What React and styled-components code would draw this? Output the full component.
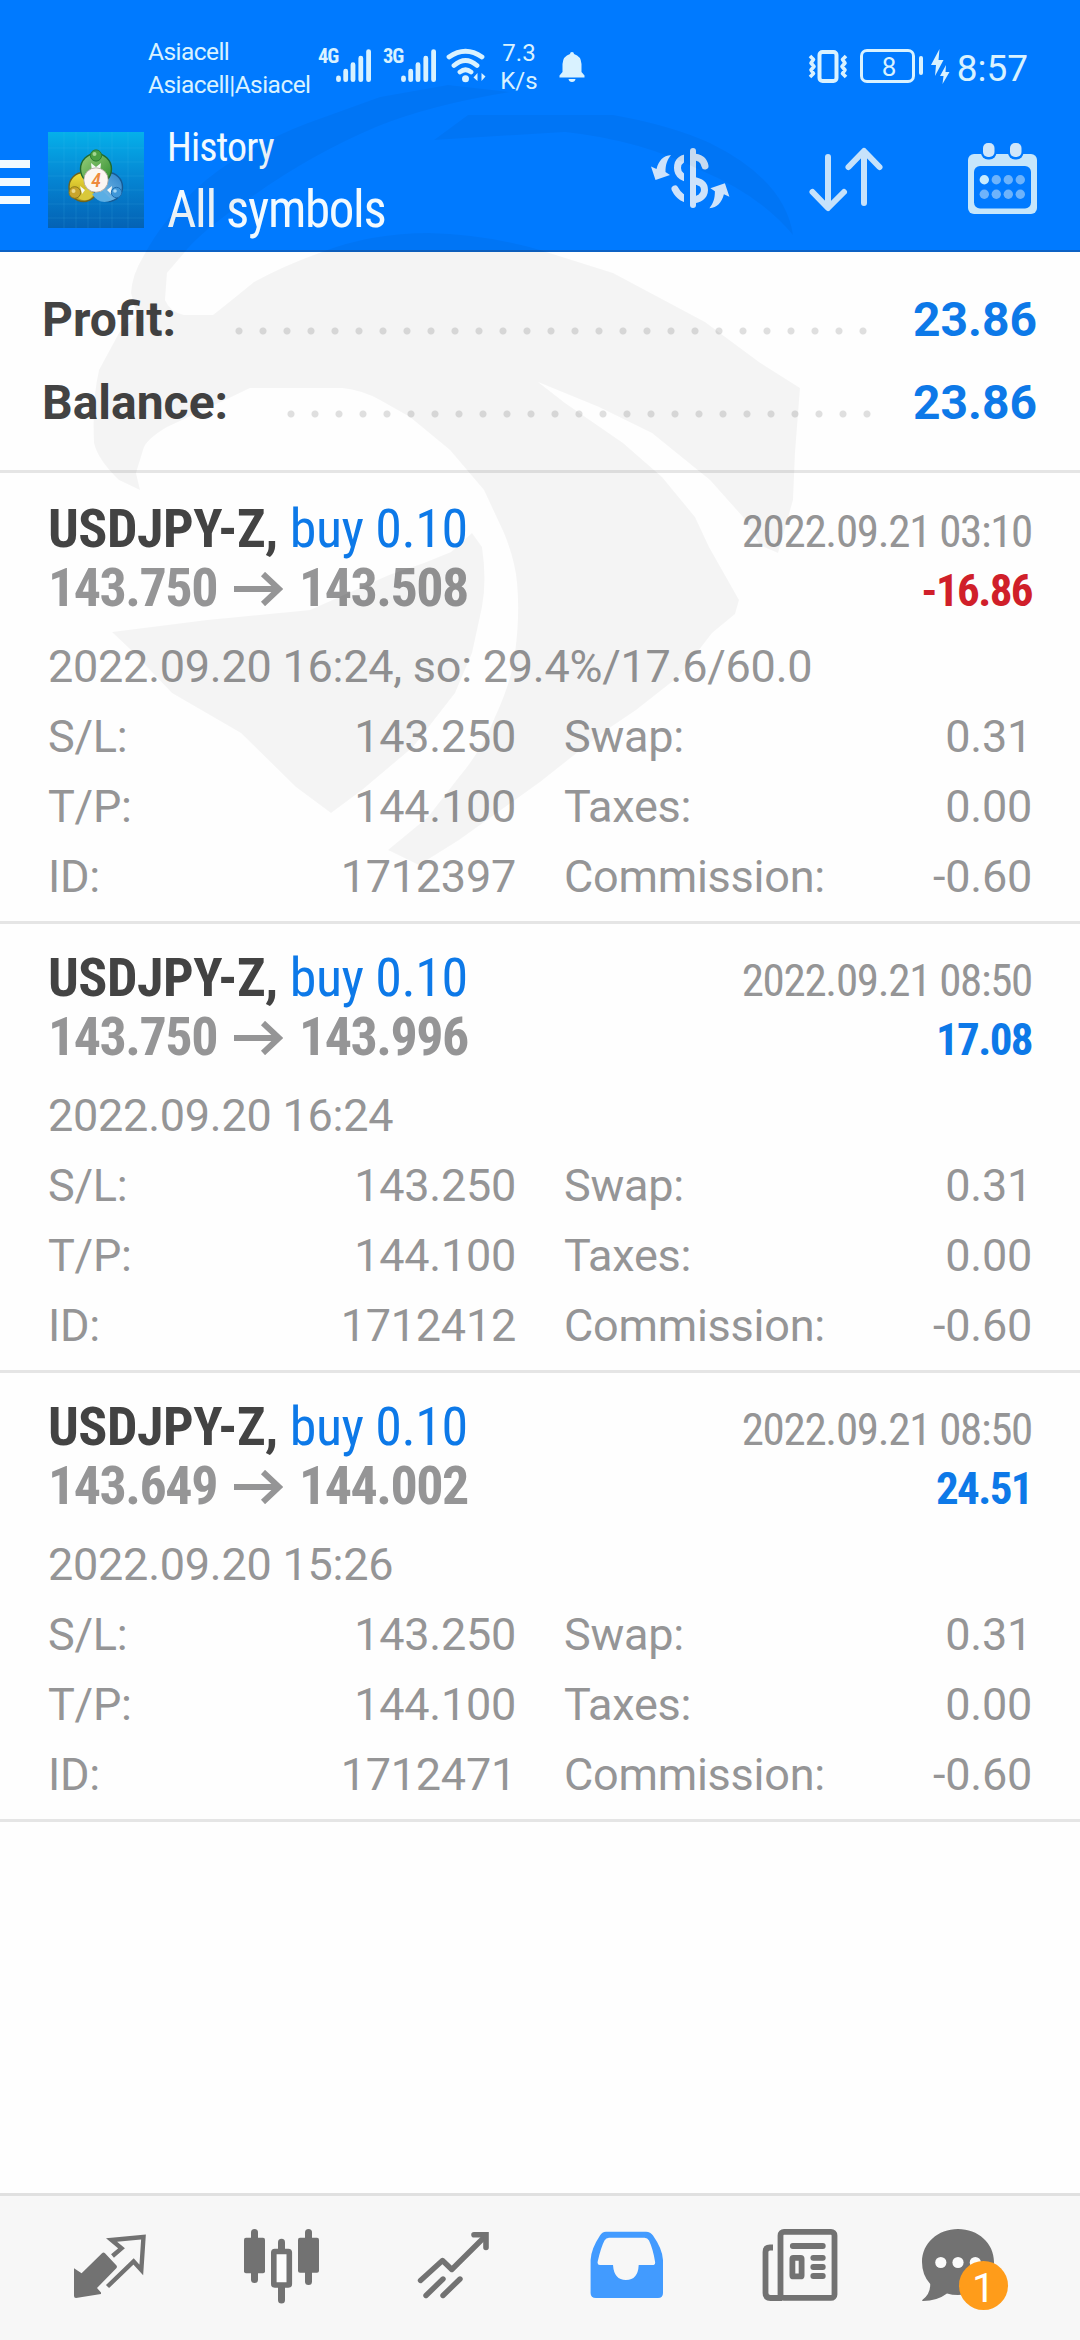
import React from 'react';
import styled, { createGlobalStyle } from 'styled-components';

const GlobalStyle = createGlobalStyle`
  * {
    box-sizing: border-box;
  }
  body {
    margin: 0;
    background: #fff;
    font-family: Roboto, sans-serif;
  }
`;

const Screen = styled.div`
  position: relative;
  display: flex;
  flex-direction: column;
  width: 1080px;
  height: 2340px;
  overflow: hidden;
  background: #fefefe;
`;

const Header = styled.header`
  height: 252px;
  background: #007aff;
  border-bottom: 2px solid #0d62c4;
  color: #f2faff;
`;

const StatusBar = styled.div`
  display: flex;
  align-items: flex-start;
  height: 116px;
  padding: 35px 52px 0 148px;
  color: #d9f2ff;
`;

const Carrier = styled.div`
  width: 170px;
  font-size: 24.5px;
  line-height: 33px;
  letter-spacing: -0.55px;
  white-space: nowrap;
`;

const Signal = styled.div`
  display: flex;
  width: 65px;
  padding-top: 12px;
`;

const SignalType = styled.span`
  width: 18px;
  font-family: 'Roboto Condensed', Roboto, sans-serif;
  font-size: 20.5px;
  font-weight: 700;
  line-height: 19px;
  letter-spacing: -1px;
`;

const WifiIcon = styled.svg`
  margin: 12px 0 0 -3px;
`;

const Speed = styled.div`
  width: 44px;
  margin-left: 10px;
  padding-top: 4px;
  font-size: 24px;
  line-height: 28px;
  text-align: center;
`;

const BellIcon = styled.svg`
  margin: 17px 0 0 18px;
`;

const StatusRight = styled.div`
  display: flex;
  margin-left: auto;
  padding-top: 14px;
`;

const Battery = styled.div`
  width: 55px;
  height: 34px;
  margin-left: 12px;
  padding-left: 4px;
  border: 3px solid #d9f2ff;
  border-radius: 7px;
  font-size: 26px;
  line-height: 30px;
  text-align: center;
`;

const BatteryTip = styled.div`
  width: 4px;
  height: 19px;
  margin: 7px 8px 0 4px;
  border-radius: 2px;
  background: #d9f2ff;
`;

const Clock = styled.div`
  margin-left: 6px;
  font-size: 37px;
  line-height: 40px;
`;

const Toolbar = styled.div`
  display: flex;
  align-items: flex-start;
  padding-right: 34px;
`;

const MenuIcon = styled.div`
  display: flex;
  flex-direction: column;
  gap: 10px;
  width: 30px;
  padding-top: 44px;
`;

const MenuBar = styled.span`
  height: 8px;
  background: #f2faff;
`;

const AppLogo = styled.svg`
  margin: 16px 0 0 18px;
`;

const Titles = styled.div`
  margin: 7px 0 0 23px;
  font-family: 'Roboto Condensed', Roboto, sans-serif;
  white-space: nowrap;
`;

const ScreenName = styled.div`
  font-size: 40px;
  line-height: 50px;
  letter-spacing: -0.9px;
`;

const Filter = styled.div`
  margin-top: 6px;
  font-size: 51px;
  line-height: 61px;
  letter-spacing: -1.35px;
`;

const Actions = styled.div`
  display: flex;
  gap: 74px;
  margin: 22px 0 0 auto;
`;

const Summary = styled.section`
  height: 221px;
  padding: 26px 43px 0 42px;
  border-bottom: 3px solid #e5e5e5;
`;

const SummaryRow = styled.div`
  display: flex;
  align-items: center;
  height: 83px;
  font-size: 48px;
  font-weight: 700;
  line-height: 83px;
  color: #434343;
`;

const Dots = styled.div`
  flex: 1;
  height: 8px;
  margin: 23px ${props => props.$right}px 0 ${props => props.$left}px;
  background: radial-gradient(circle at 4px 4px, #dfdfdf 3px, transparent 4px) 0 0 / 24px 8px;
`;

const SummaryValue = styled.span`
  color: #0d79e8;
`;

const Deal = styled.article`
  height: ${props => (props.$first ? 451 : 449)}px;
  padding: ${props => (props.$first ? 26 : 24)}px 48px 0;
  border-bottom: 3px solid #e5e5e5;
  color: #959596;
  font-size: 45px;
  line-height: 70px;
  letter-spacing: -0.25px;
  white-space: nowrap;
`;

const DealLine = styled.div`
  display: flex;
  align-items: baseline;
  justify-content: space-between;
  height: 59px;
  font-family: 'Roboto Condensed', Roboto, sans-serif;
  line-height: 59px;
  letter-spacing: -1.3px;
`;

const Symbol = styled.span`
  font-size: 54px;
  font-weight: 700;
  letter-spacing: -0.5px;
  color: #434343;
`;

const Volume = styled.span`
  font-weight: 400;
  color: #0d79e8;
`;

const Prices = styled.span`
  font-size: 54px;
  font-weight: 700;
  letter-spacing: -1.5px;
`;

const ArrowIcon = styled.svg`
  margin: 0 16px 0 17px;
`;

const Result = styled.span`
  font-weight: 700;
  letter-spacing: -1.6px;
  color: ${props => (props.$loss ? '#d01f2a' : '#0d79e8')};
`;

const OpenTime = styled.div`
  margin-top: 15px;
`;

const Details = styled.div`
  display: grid;
  grid-template-columns: 468px 468px;
  column-gap: 48px;
`;

const Detail = styled.div`
  display: flex;
  justify-content: space-between;
`;

const NavBar = styled.nav`
  display: flex;
  height: 147px;
  margin-top: auto;
  padding: 0 24px;
  background: #f7f7f7;
  border-top: 3px solid #e0e0e0;
  color: #727272;
`;

const NavItem = styled.div`
  display: flex;
  flex: 1;
  justify-content: center;
  padding-top: 26px;
  color: ${props => (props.$active ? '#429bff' : 'inherit')};
`;

const ChatIcon = styled.div`
  position: relative;
  width: 88px;
  height: 90px;
  margin-right: 8px;
`;

const Badge = styled.span`
  position: absolute;
  left: 37px;
  top: 39px;
  width: 49px;
  height: 49px;
  border-radius: 50%;
  background: #ff9c1a;
  color: #fff;
  font-size: 41px;
  line-height: 55px;
  text-align: center;
`;

const Watermark = styled.svg`
  position: absolute;
  left: 0;
  top: 0;
  pointer-events: none;
`;

const deals = [
  { id: '1712397', open: '143.750', close: '143.508', closed: '2022.09.21 03:10', result: '-16.86', opened: '2022.09.20 16:24, so: 29.4%/17.6/60.0' },
  { id: '1712412', open: '143.750', close: '143.996', closed: '2022.09.21 08:50', result: '17.08', opened: '2022.09.20 16:24' },
  { id: '1712471', open: '143.649', close: '144.002', closed: '2022.09.21 08:50', result: '24.51', opened: '2022.09.20 15:26' },
];

const SignalBars = () => (
  <svg width="37" height="36" viewBox="0 0 37 36" stroke="#d9f2ff" strokeWidth="4.8" strokeLinecap="round">
    <path d="M2.5 31V32.7M9.7 24.2V32.7M17 17.7V32.7M24.8 11.2V32.7M32.6 4.6V32.7" />
  </svg>
);

const Logo = () => (
  <AppLogo width="96" height="96" viewBox="0 0 96 96">
    <defs>
      <linearGradient id="sky" x1="0" y1="0" x2="0" y2="1">
        <stop offset="0" stopColor="#05b0ea" />
        <stop offset="0.5" stopColor="#0584d2" />
        <stop offset="1" stopColor="#0462b4" />
      </linearGradient>
      <linearGradient id="green" x1="0" y1="0" x2="1" y2="1">
        <stop offset="0" stopColor="#9bd07c" />
        <stop offset="1" stopColor="#2a8a2c" />
      </linearGradient>
      <linearGradient id="yellow" x1="0" y1="0" x2="0" y2="1">
        <stop offset="0" stopColor="#f2e23c" />
        <stop offset="1" stopColor="#b59a1c" />
      </linearGradient>
      <linearGradient id="blue" x1="1" y1="0" x2="0" y2="1">
        <stop offset="0" stopColor="#2a80c8" />
        <stop offset="1" stopColor="#8ccdf2" />
      </linearGradient>
    </defs>
    <rect width="96" height="96" fill="url(#sky)" />
    <path d="M16 0V96M28 0V96M40 0V96M52 0V96M64 0V96M80 0V96M0 16H96M0 30H96M0 44H96M0 58H96M0 72H96M0 86H96" stroke="#5cc4f0" strokeOpacity="0.14" />
    <circle cx="35.500" cy="55" r="14.500" fill="url(#yellow)" stroke="#6c6420" strokeWidth="1.400" />
    <circle cx="60" cy="55" r="14.500" fill="url(#blue)" stroke="#165a94" strokeWidth="1.400" />
    <circle cx="48" cy="37" r="15.500" fill="url(#green)" stroke="#1f6a30" strokeWidth="1.400" />
    <path d="M30 66Q40 72 46 62L38 56Z" fill="#d9c83a" />
    <path d="M44 62Q52 74 64 68L54 58Z" fill="#5aaee4" />
    <path d="M43 31L48 35L53 31L52 40H44ZM32 54L37 58L34 62ZM64 54L59 58L63 62Z" fill="#f4f8f4" />
    <circle cx="48" cy="23.500" r="5.600" fill="#4ba043" stroke="#2a7a30" />
    <circle cx="26.800" cy="60.500" r="5.800" fill="#c9a52c" stroke="#8c7818" />
    <circle cx="68.500" cy="60.500" r="5.200" fill="#3f97d8" stroke="#1f6cae" />
    <circle cx="46.500" cy="22" r="2" fill="#a4d690" />
    <circle cx="25.500" cy="59" r="2" fill="#ecd98a" />
    <circle cx="67" cy="59" r="1.800" fill="#a6d8f6" />
    <circle cx="48" cy="48" r="12.200" fill="#fbf6f2" stroke="#a9a29a" strokeWidth="0.800" />
    <text x="48" y="55" textAnchor="middle" fontFamily="Roboto Condensed, sans-serif" fontSize="20" fontStyle="italic" fontWeight="500" fill="#ee8a3c">4</text>
  </AppLogo>
);

const CurrencyIcon = () => (
  <svg width="84" height="84" viewBox="0 0 84 84" fill="#cfe3fa">
    <clipPath id="split">
      <path d="M0 0H38V84H0ZM44 0H84V84H44Z" />
    </clipPath>
    <path d="M59 28C57.500 21 53 19 46.500 19C36 19 31.500 23 31.500 30C31.500 38 38 40 46.500 42S58.500 46 58.500 52S53 62 46 62S33 59 29 51" fill="none" stroke="#cfe3fa" strokeWidth="7" strokeLinecap="round" clipPath="url(#split)" />
    <rect x="44" y="10" width="6" height="60" rx="3" />
    <path id="turn" d="M25 17C17 18 13 22 10.500 31L5 28.500L9.500 42L24 37L19.500 34C19.500 27 21 22 25 17Z" />
    <use href="#turn" transform="rotate(180 44.2 43.6)" />
  </svg>
);

const SortIcon = () => (
  <svg width="84" height="84" viewBox="0 0 84 84" fill="none" stroke="#c6e2fb" strokeWidth="6" strokeLinecap="round" strokeLinejoin="round">
    <path d="M24 19V69M8.500 54L24 70L40 54M60 65V14M44.500 29L60 13L75.500 29" />
  </svg>
);

const CalendarIcon = () => (
  <svg width="84" height="84" viewBox="0 0 84 84">
    <rect x="6" y="16" width="69" height="60" rx="6" fill="#c6e6fb" />
    <rect x="12" y="28" width="57" height="42.500" rx="6" fill="#007aff" />
    <rect x="19" y="3" width="15.500" height="18.500" rx="7" fill="#007aff" />
    <rect x="46" y="3" width="15.500" height="18.500" rx="7" fill="#007aff" />
    <rect x="21" y="5" width="11.500" height="14" rx="5" fill="#cfe6fa" />
    <rect x="48" y="5" width="11.500" height="14" rx="5" fill="#cfe6fa" />
    {[41.7, 56.3].map(cy => [22.3, 34.3, 46.3, 58.3].map(cx => (
      <circle key={`${cx}-${cy}`} cx={cx} cy={cy} r="4.700" fill={cx === 22.3 && cy === 41.7 ? '#c6ecff' : '#6db3fb'} />
    )))}
  </svg>
);

const QuotesIcon = () => (
  <svg width="80" height="90" viewBox="0 0 80 90">
    <path d="M4 46.300L11.600 51.300L32 31.200Q33.500 30 35 31.200L46.500 43.500Q47.500 45 46.300 46.300L27 66L31 70.500V72L6 76Q4 76 4 74Z" fill="currentColor" />
    <path d="M42.500 34L51.500 26.300L41.500 18L73.500 15L71.300 48L63.600 39.500L37.500 64.500" fill="none" stroke="currentColor" strokeWidth="4.400" />
  </svg>
);

const CandlesIcon = () => (
  <svg width="80" height="90" viewBox="0 0 80 90" fill="currentColor">
    <rect x="9" y="7" width="7" height="54" rx="3.500" />
    <rect x="2" y="15.700" width="21" height="35.500" rx="2" />
    <rect x="36" y="16.700" width="7" height="20" rx="3.500" />
    <rect x="36" y="56" width="7" height="25.500" rx="3.500" />
    <rect x="31.800" y="29.500" width="15.500" height="33.500" rx="1" fill="#fcfcfc" stroke="currentColor" strokeWidth="5.600" />
    <rect x="63" y="7" width="7" height="56" rx="3.500" />
    <rect x="56" y="15.700" width="21" height="35" rx="2" />
  </svg>
);

const TradeIcon = () => (
  <svg width="80" height="90" viewBox="0 0 80 90" fill="none" stroke="currentColor" strokeWidth="5.400" strokeLinecap="round">
    <path d="M6.500 58.500L28.500 38.500L37.800 47.500L71 14.500" strokeLinejoin="round" />
    <path d="M60 12.700H72V25.500" strokeWidth="5.600" />
    <path d="M12 73.500L29 57M29 73.500L46 57" />
  </svg>
);

const HistoryIcon = () => (
  <svg width="80" height="90" viewBox="0 0 80 90">
    <path fillRule="evenodd" fill="currentColor" d="M20 9.700H60Q64.500 9.700 67 13.500Q76.500 27 77 38V71Q77 76 72 76H10Q4.600 76 4.600 71V38Q5 27 14 13.500Q16 9.700 20 9.700ZM23 15.700Q20 15.700 18.500 18.500Q15 25 11.700 39.500Q11 43 14 43H27Q28 58 40 58T52.700 43H66.500Q69.800 43 69 39.500Q67 27 63 18.500Q61.500 15.700 58.500 15.700Z" />
  </svg>
);

const NewsIcon = () => (
  <svg width="80" height="90" viewBox="0 0 80 90" fill="none" stroke="currentColor" strokeWidth="5.800">
    <rect x="22.500" y="9.900" width="54" height="66" rx="3.500" />
    <path d="M15 25.500H12Q7.500 25.500 7.500 30V71Q7.500 76 12.500 76H24" />
    <path d="M34.800 24H64.800M55.300 35.800H64.800M55.300 45H64.800M55.300 54H64.800" strokeLinecap="round" />
    <rect x="34.400" y="35.800" width="9.200" height="18.600" rx="1" />
  </svg>
);

const MessagesIcon = () => (
  <svg width="88" height="90" viewBox="0 0 88 90">
    <path fill="currentColor" d="M36 7C56 7 72 21 72 40S56 73 36 73Q30 73 25 71.500Q15 79 1 79Q0 79 0.300 78Q8.500 72 8.200 62Q0 53 0 40C0 21 16 7 36 7Z" />
    <g fill="#fbfbfb">
      <circle cx="18.800" cy="40.500" r="5.600" />
      <circle cx="36" cy="40.500" r="5.600" />
      <circle cx="53.300" cy="40.500" r="5.600" />
    </g>
  </svg>
);

const DealItem = ({ deal, first }) => (
  <Deal $first={first}>
    <DealLine>
      <Symbol>USDJPY-Z, <Volume>buy 0.10</Volume></Symbol>
      <span>{deal.closed}</span>
    </DealLine>
    <DealLine>
      <Prices>
        {deal.open}
        <ArrowIcon width="49" height="34" viewBox="0 0 49 34" fill="none" stroke="currentColor" strokeWidth="6">
          <path d="M0 17H45M29 2L45 17L29 32" />
        </ArrowIcon>
        {deal.close}
      </Prices>
      <Result $loss={deal.result.startsWith('-')}>{deal.result}</Result>
    </DealLine>
    <OpenTime>{deal.opened}</OpenTime>
    <Details>
      <Detail><span>S/L:</span><span>143.250</span></Detail>
      <Detail><span>Swap:</span><span>0.31</span></Detail>
      <Detail><span>T/P:</span><span>144.100</span></Detail>
      <Detail><span>Taxes:</span><span>0.00</span></Detail>
      <Detail><span>ID:</span><span>{deal.id}</span></Detail>
      <Detail><span>Commission:</span><span>-0.60</span></Detail>
    </Details>
  </Deal>
);

export default function App() {
  return (
    <Screen>
      <GlobalStyle />
      <Header>
        <StatusBar>
          <Carrier>Asiacell<br />Asiacell|Asiacel</Carrier>
          <Signal><SignalType>4G</SignalType><SignalBars /></Signal>
          <Signal><SignalType>3G</SignalType><SignalBars /></Signal>
          <WifiIcon width="42" height="38" viewBox="0 0 42 38" fill="none" stroke="#d9f2ff" strokeWidth="4.800" strokeLinecap="round">
            <path d="M4 10Q20.500 -1.500 37 10M9 18.500Q20.500 8.500 32 18.500M15 25Q20.500 20.500 26 25" />
            <circle cx="20.500" cy="31.700" r="3.500" fill="#d9f2ff" stroke="none" />
            <path d="M32.500 26V34L28.500 30.500ZM36.500 34V26L40.500 29.500Z" fill="#d9f2ff" stroke="none" />
          </WifiIcon>
          <Speed>7.3<br />K/s</Speed>
          <BellIcon width="26" height="32" viewBox="0 0 26 32" fill="#d9f2ff">
            <path d="M11 2Q11 0 13 0T15 2Q22 4 22.500 12V20L25.500 23.500V25.500H0.500V23.500L3.500 20V12Q4 4 11 2ZM9.500 27H16.500Q16 30 13 30T9.500 27Z" />
          </BellIcon>
          <StatusRight>
            <svg width="40" height="36" viewBox="0 0 40 36" fill="none" stroke="#d9f2ff" strokeWidth="3.600" strokeLinejoin="round">
              <rect x="11.500" y="3" width="17" height="29" rx="3" strokeWidth="4" />
              <path d="M2 7L5.500 10.500L3 14L6 17.500L3 21L5.500 24.500L2 28M38 7L34.500 10.500L37 14L34 17.500L37 21L34.500 24.500L38 28" />
            </svg>
            <Battery>8</Battery>
            <BatteryTip />
            <svg width="20" height="36" viewBox="0 0 20 36" fill="#d9f2ff">
              <path d="M8.500 0L0 16H5L4 27L12.500 11H7.500ZM15 16L9 27H12.500L11.500 35L18.500 23H14.500Z" />
            </svg>
            <Clock>8:57</Clock>
          </StatusRight>
        </StatusBar>
        <Toolbar>
          <MenuIcon>
            <MenuBar />
            <MenuBar />
            <MenuBar />
          </MenuIcon>
          <Logo />
          <Titles>
            <ScreenName>History</ScreenName>
            <Filter>All symbols</Filter>
          </Titles>
          <Actions>
            <CurrencyIcon />
            <SortIcon />
            <CalendarIcon />
          </Actions>
        </Toolbar>
      </Header>
      <Summary>
        <SummaryRow>
          <span>Profit:</span>
          <Dots $left={59.5} $right={45} />
          <SummaryValue>23.86</SummaryValue>
        </SummaryRow>
        <SummaryRow>
          <span>Balance:</span>
          <Dots $left={59} $right={42} />
          <SummaryValue>23.86</SummaryValue>
        </SummaryRow>
      </Summary>
      {deals.map((deal, i) => <DealItem key={deal.id} deal={deal} first={i === 0} />)}
      <NavBar>
        <NavItem><QuotesIcon /></NavItem>
        <NavItem><CandlesIcon /></NavItem>
        <NavItem><TradeIcon /></NavItem>
        <NavItem $active><HistoryIcon /></NavItem>
        <NavItem><NewsIcon /></NavItem>
        <NavItem>
          <ChatIcon>
            <MessagesIcon />
            <Badge>1</Badge>
          </ChatIcon>
        </NavItem>
      </NavBar>
      <Watermark width="1080" height="900" viewBox="0 0 1080 900" fill="#000" fillOpacity="0.038">
        <path d="M213 315Q232 300 254 282Q285 265 322 252Q371 233 429 233Q490 235 540 250L613 273L705 322L759 362L800 388L795 453L793 500L778 553L760 545L743 517L710 480L652 433L599 407L538 382L565 403L623 443L662 477L695 517L709 547L726 577L739 600L735 614L712 633L678 677L636 710L602 733L540 782L459 840L419 865L388 850L428 817L459 777Q482 750 495 717Q512 680 515 653Q520 615 517 583Q515 560 504 533L484 490L450 450L410 417L380 400Q362 390 342 388H250L225 400L167 427Q145 440 143 450L136 473L140 490L119 480Q98 460 94 443Q92 400 99 370L119 333L137 315L131 293Q132 275 143 257Q165 215 206 180Q250 145 308 123L380 97L448 85L510 92Q430 105 376 127Q310 155 250 198Q200 232 184 253L167 273L165 300Q170 312 184 315Z" />
        <path d="M434 140L468 115H613Q670 125 710 143Q785 180 793 235Q760 195 700 170Q640 140 565 132Z" />
        <path d="M112 632L207 620L310 610L389 575L424 563L451 552L472 533L482 547Q487 580 482 607L472 653L455 693L413 747L362 790L331 813L296 787L241 733L172 693L131 650Z" />
      </Watermark>
    </Screen>
  );
}
